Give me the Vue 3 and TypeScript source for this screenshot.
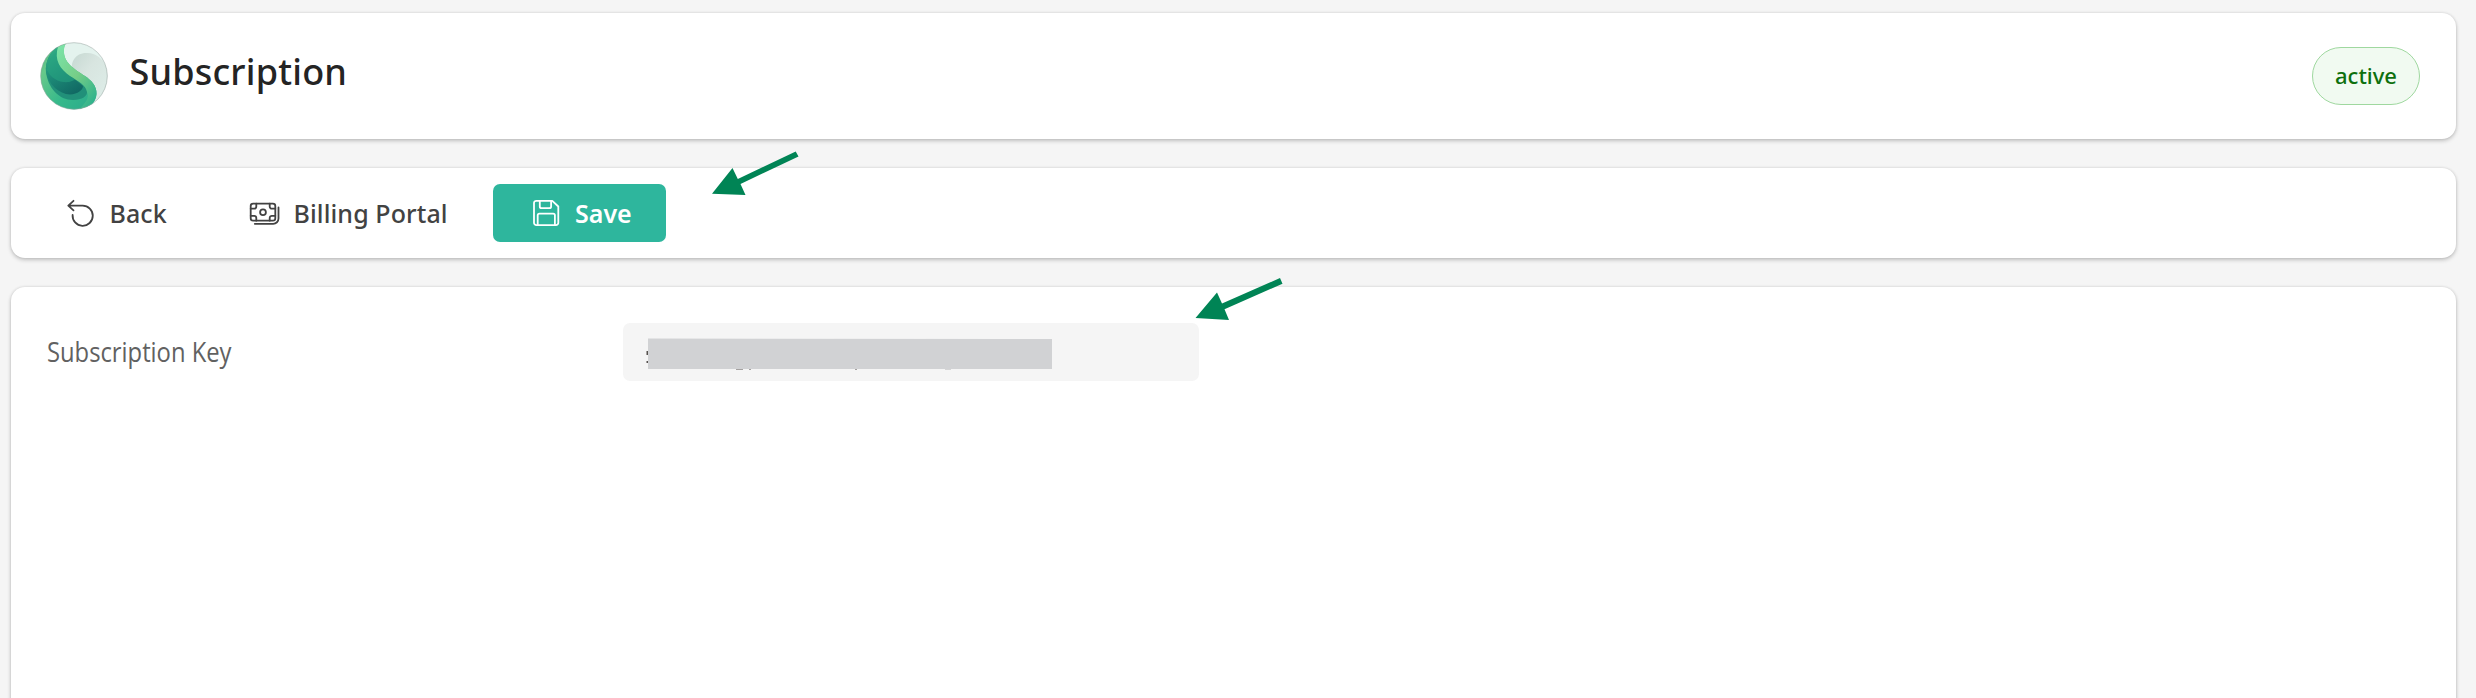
<script setup lang="ts">
const status: string = 'active'
const fieldLabel: string = 'Subscription Key'
</script>

<template>
  <main class="page">
    <header class="card header">
      <svg class="logo" viewBox="0 0 68 68" aria-hidden="true">
        <defs>
          <linearGradient id="rim" x1="0" y1="0" x2="1" y2="1">
            <stop offset="0" stop-color="#3fae7d" />
            <stop offset="0.25" stop-color="#68c98a" />
            <stop offset="0.6" stop-color="#36b98b" />
            <stop offset="1" stop-color="#2aa98b" />
          </linearGradient>
          <linearGradient id="deep" x1="0.2" y1="0" x2="0.7" y2="1">
            <stop offset="0" stop-color="#34b186" />
            <stop offset="0.5" stop-color="#1d8a77" />
            <stop offset="1" stop-color="#116a64" />
          </linearGradient>
          <linearGradient id="ribbon" x1="0" y1="0" x2="0.8" y2="1">
            <stop offset="0" stop-color="#7be6ac" />
            <stop offset="0.55" stop-color="#76cd87" />
            <stop offset="1" stop-color="#2eb28c" />
          </linearGradient>
          <linearGradient id="pale" x1="0" y1="0" x2="0.8" y2="1">
            <stop offset="0" stop-color="#c6d8d2" />
            <stop offset="0.4" stop-color="#d8e5e0" />
            <stop offset="1" stop-color="#deeee9" />
          </linearGradient>
          <clipPath id="disc"><circle cx="34" cy="34" r="33.4" /></clipPath>
        </defs>
        <g clip-path="url(#disc)">
          <rect width="68" height="68" fill="#e4f3ee" />
          <path d="M33 31C29 20 36 10.500 47 11C57 11 64 18 68 28V68H54L50 42Z" fill="url(#pale)" />
          <path d="M27 0H0V68H45C52 65 56 58 56.500 52C57 44 51 38 45 34C34 27 23 20 24 8Q24 3 27 0Z" fill="url(#rim)" />
          <path d="M18 4C10 10 5 20 6 30C8 46 19 58 33 58C42 58 48 54 47 49C47 44 40 40 32 35C22 29 14 19 18 4Z" fill="#219079" />
          <path d="M18 4C10 10 5 20 6 30C9 43 19 52 30 52.500C38 52 43 48 43 44L32 35C22 29 14 19 18 4Z" fill="url(#deep)" />
          <path d="M7 28C11 37 20 41 29 40Q33 39 36 37Q25 32 20 23Q16 15 17 9Q9 16 7 28Z" fill="#28a582" opacity="0.55" />
          <path d="M27 0L18 5C14 18 20 27 30 34C38 39 46 43 47 50C50 56 45 61 39 68C50 66 56 60 56.500 52C57 44 51 38 45 34C34 27 23 20 24 8Q24 3 27 0Z" fill="url(#ribbon)" />
        </g>
        <circle cx="34" cy="34" r="33.300" fill="none" stroke="#98a5a0" stroke-opacity="0.65" stroke-width="0.8" />
      </svg>
      <h1 class="title">Subscription</h1>
      <span class="badge"><span class="badge-text">{{ status }}</span></span>
    </header>

    <nav class="card toolbar">
      <button class="btn back" type="button">
        <svg class="icon" viewBox="0 0 32 32" aria-hidden="true">
          <path d="M9.500 3.800L4.300 8.600L9.500 13.400M4.500 8.600H18.500A10.100 10.100 0 1 1 8.600 18" />
        </svg>
        <span>Back</span>
      </button>
      <button class="btn billing" type="button">
        <svg class="icon" viewBox="0 0 32 32" aria-hidden="true">
          <rect x="2.700" y="6.700" width="24.600" height="17" rx="2.400" />
          <circle cx="15" cy="15.200" r="2.900" />
          <path d="M8.300 6.700V9.500A2.200 2.200 0 0 1 6.100 11.700H2.700M21.700 6.700V9.500A2.200 2.200 0 0 0 23.900 11.700H27.300M8.300 23.700V21A2.200 2.200 0 0 0 6.100 18.800H2.700M21.700 23.700V21A2.200 2.200 0 0 1 23.900 18.800H27.300M30.500 10.400V21.500A5.300 5.300 0 0 1 25.200 26.800H6.800" />
        </svg>
        <span>Billing Portal</span>
      </button>
      <button class="btn save" type="button">
        <svg class="icon" viewBox="0 0 32 32" aria-hidden="true">
          <path d="M6.300 3.800H22.300L28.300 9.500V25.800A2.300 2.300 0 0 1 26 28.100H6.300A2.300 2.300 0 0 1 4 25.800V6.100A2.300 2.300 0 0 1 6.300 3.800ZM9.800 3.800V9.500A1.700 1.700 0 0 0 11.500 11.200H19.400A1.700 1.700 0 0 0 21.100 9.500V3.800M7.700 28.100V18.300A1.700 1.700 0 0 1 9.400 16.600H23.200A1.700 1.700 0 0 1 24.900 18.300V28.100" />
        </svg>
        <span>Save</span>
      </button>
    </nav>

    <section class="card details">
      <div class="label-cell"><span class="label">{{ fieldLabel }}</span></div>
      <div class="field">
        <svg class="redaction" viewBox="0 0 410 36" aria-hidden="true">
          <path d="M.500 13h2v4h-2zM.500 23h2v2h-2zM90 30h7v1.500h-7zM103 30h2v1.500h-2zM209 30h2v1.500h-2z" fill="#56514e" />
          <path d="M299 30h6v1.500h-6z" fill="#b5b5b7" />
          <path d="M2 .500L406 1V31H2Z" fill="#d1d2d4" />
        </svg>
      </div>
    </section>

    <svg class="pointer save-pointer" viewBox="0 0 90 46" aria-hidden="true">
      <path d="M84.700 .500L87.500 5.500L29.500 33L34.500 44L1 42.800L21.500 17L26.800 28Z" />
    </svg>
    <svg class="pointer field-pointer" viewBox="0 0 90 46" aria-hidden="true">
      <path d="M85 1L87.500 6.700L29.500 32.300L34 43L.500 41L22 15.500L27 26.400Z" />
    </svg>
  </main>
</template>

<style>
body {
  margin: 0;
  background: #f5f5f5;
  overflow: hidden;
}
</style>

<style scoped>
.page {
  box-sizing: border-box;
  position: relative;
  display: flex;
  flex-direction: column;
  gap: 29px;
  height: 698px;
  padding: 13px 20px 0 11px;
  overflow: hidden;
  background: #f5f5f5;
  font-family: "Noto Sans", "Open Sans", sans-serif;
}
.card {
  box-sizing: border-box;
  display: flex;
  flex-shrink: 0;
  border-radius: 14px;
  background: #fff;
  box-shadow: 0 2px 4px rgba(0, 0, 0, 0.2), 0 0 3px rgba(0, 0, 0, 0.12);
}
.header {
  align-items: center;
  height: 126px;
  padding: 0 36px 0 29px;
}
.logo {
  width: 68px;
  height: 68px;
}
.title {
  margin: -8px 0 0 21.5px;
  color: #242424;
  font-size: 36px;
  font-weight: 500;
  line-height: 50px;
  letter-spacing: 0.2px;
}
.badge {
  box-sizing: border-box;
  display: flex;
  align-items: center;
  justify-content: center;
  width: 108px;
  height: 58px;
  margin-left: auto;
  border: 1px solid #9fd89f;
  border-radius: 29px;
  background: #f1faf1;
  color: #0e700e;
  font-size: 22px;
  font-weight: 500;
}
.badge-text {
  margin-top: -2px;
}
.toolbar {
  align-items: center;
  height: 90px;
  padding-left: 30px;
}
.btn {
  display: flex;
  align-items: center;
  height: 58px;
  padding: 0 0 0 23px;
  gap: 13.5px;
  border: 0;
  border-radius: 7px;
  background: transparent;
  color: #424242;
  font-family: inherit;
  font-size: 25px;
  font-weight: 500;
  letter-spacing: 0.1px;
  white-space: nowrap;
}
.icon {
  width: 32px;
  height: 32px;
  fill: none;
  stroke: currentColor;
  stroke-width: 1.8;
  stroke-linecap: round;
  stroke-linejoin: round;
}
.back {
  width: 184px;
}
.billing {
  width: 268px;
}
.save {
  width: 173px;
  padding-left: 37px;
  gap: 13px;
  background: #2eb69d;
  color: #fff;
  font-weight: 600;
  letter-spacing: 0;
}
.details {
  align-items: flex-start;
  height: 480px;
  padding: 36px 0 0 36px;
}
.label-cell {
  width: 576px;
}
.label {
  display: inline-block;
  color: #616161;
  font-family: "Open Sans", sans-serif;
  font-size: 26.5px;
  line-height: 59px;
  transform: scaleX(0.897);
  transform-origin: left center;
}
.field {
  display: flex;
  align-items: center;
  width: 576px;
  height: 58px;
  padding-left: 23px;
  box-sizing: border-box;
  border-radius: 7px;
  background: #f5f5f5;
}
.redaction {
  width: 410px;
  height: 36px;
  margin-top: 7px;
}
.pointer {
  position: absolute;
  width: 90px;
  height: 46px;
  fill: #008455;
}
.save-pointer {
  left: 711px;
  top: 151px;
}
.field-pointer {
  left: 1195px;
  top: 277px;
}
</style>
